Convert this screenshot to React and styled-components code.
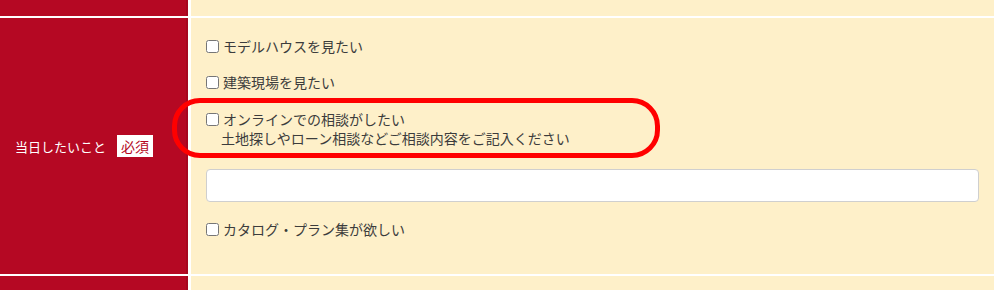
import React from 'react';
import styled, { createGlobalStyle } from 'styled-components';

const GlobalStyle = createGlobalStyle`
  html, body {
    margin: 0;
    padding: 0;
    background: #ffffff;
  }
  body {
    font-family: "Noto Sans CJK JP", "Noto Sans", sans-serif;
  }
`;

const Table = styled.div`
  width: 994px;
  height: 290px;
  overflow: hidden;
  display: flex;
  flex-direction: column;
  gap: 2px;
  background: #ffffff;
`;

const Row = styled.div`
  display: grid;
  grid-template-columns: 188px 1fr;
  grid-template-rows: ${(p) => p.$height}px;
  column-gap: 3px;
  height: ${(p) => p.$height}px;
  flex-shrink: 0;
  overflow: hidden;
`;

const Head = styled.div`
  background: #b50823;
  box-shadow: inset -2px 0 0 #a6061f;
  color: #ffffff;
  display: flex;
  align-items: center;
  padding-left: 15px;
  font-size: 13px;
`;

const Badge = styled.span`
  display: inline-flex;
  align-items: center;
  justify-content: center;
  margin-left: 11px;
  width: 36px;
  height: 22px;
  background: #ffffff;
  color: #b50823;
  font-size: 14px;
`;

const Body = styled.div`
  position: relative;
  background: #fef0c9;
  box-sizing: border-box;
  padding: ${(p) => (p.$form ? '18px 15px 0 14px' : '0')};
  display: flex;
  flex-direction: column;
`;

const Option = styled.label`
  display: flex;
  align-items: center;
  font-size: 14px;
  line-height: 20px;
  color: #3c3c3c;
  margin-top: ${(p) => p.$top}px;
`;

const Box = styled.input`
  width: 13px;
  height: 13px;
  margin: 0 4px 0 1px;
`;

const Note = styled.div`
  font-size: 14px;
  line-height: 19px;
  color: #3c3c3c;
  padding-left: 16px;
`;

const TextInput = styled.input`
  margin: 21px 0 0 1px;
  height: 33px;
  box-sizing: border-box;
  border: 1px solid #cfcfcf;
  border-radius: 4px;
  background: #ffffff;
  font-size: 14px;
  outline: none;
`;

const Highlight = styled.div`
  position: absolute;
  left: -19px;
  top: 80px;
  width: 488px;
  height: 60px;
  box-sizing: border-box;
  border: 5px solid #ff0000;
  border-radius: 28px;
  pointer-events: none;
`;

export default function App() {
  return (
    <>
      <GlobalStyle />
      <Table>
        <Row $height={16}>
          <Head />
          <Body />
        </Row>
        <Row $height={256}>
          <Head>
            当日したいこと<Badge>必須</Badge>
          </Head>
          <Body $form>
            <Option $top={0}>
              <Box type="checkbox" />
              モデルハウスを見たい
            </Option>
            <Option $top={16}>
              <Box type="checkbox" />
              建築現場を見たい
            </Option>
            <Option $top={17}>
              <Box type="checkbox" />
              オンラインでの相談がしたい
            </Option>
            <Note>土地探しやローン相談などご相談内容をご記入ください</Note>
            <TextInput type="text" />
            <Option $top={17}>
              <Box type="checkbox" />
              カタログ・プラン集が欲しい
            </Option>
            <Highlight />
          </Body>
        </Row>
        <Row $height={20}>
          <Head />
          <Body />
        </Row>
      </Table>
    </>
  );
}
